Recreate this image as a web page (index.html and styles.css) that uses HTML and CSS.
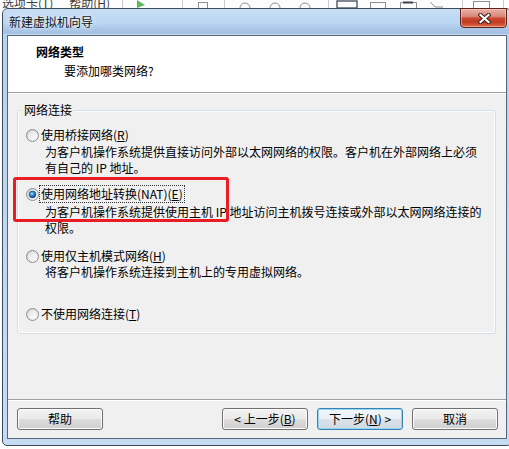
FILE: index.html
```html
<!DOCTYPE html>
<html lang="zh-CN">
<head>
<meta charset="utf-8">
<title>新建虚拟机向导</title>
<link rel="stylesheet" href="styles.css">
</head>
<body>
<div class="app-strip">
  <svg class="defs" width="0" height="0" aria-hidden="true">
    <defs>
      <linearGradient id="rOuter" x1="0" y1="0" x2="1" y2="1">
        <stop offset="0" stop-color="#cfcfcf"/>
        <stop offset="1" stop-color="#fbfbfb"/>
      </linearGradient>
      <linearGradient id="rInner" x1="0" y1="0" x2="1" y2="1">
        <stop offset="0" stop-color="#e2e2e2"/>
        <stop offset="1" stop-color="#ffffff"/>
      </linearGradient>
      <radialGradient id="rDot" cx="0.42" cy="0.38" r="0.6">
        <stop offset="0" stop-color="#a8e2ff"/>
        <stop offset="0.45" stop-color="#3a8fd6"/>
        <stop offset="1" stop-color="#123f78"/>
      </radialGradient>
    </defs>
  </svg>
  <span class="menu menu1">选项卡(T)</span>
  <span class="menu menu2">帮助(H)</span>
  <svg class="toolbar" width="394" height="8" viewBox="0 0 394 8" aria-hidden="true">
    <g stroke="#c8ccd2" stroke-width="1">
      <line x1="7.5" y1="0" x2="7.5" y2="8"/>
      <line x1="67.5" y1="0" x2="67.5" y2="8"/>
      <line x1="109.5" y1="0" x2="109.5" y2="8"/>
      <line x1="213.5" y1="0" x2="213.5" y2="8"/>
      <line x1="347.5" y1="0" x2="347.5" y2="8"/>
      <line x1="388.5" y1="0" x2="388.5" y2="8"/>
    </g>
    <path d="M22 0 L30 5 L22 8 Z" fill="#5cb85c"/>
    <g fill="none" stroke="#8c9097" stroke-width="1">
      <rect x="83.5" y="2.5" width="9" height="6"/>
      <path d="M125 8 A5 5 0 0 1 135 8"/>
      <path d="M155 8 A5 5 0 0 1 165 8"/>
      <path d="M185 8 A5 5 0 0 1 195 8"/>
      <rect x="255.5" y="2.5" width="15" height="6"/>
      <path d="M285.5 8 V2.5 H301.5 V8"/>
      <path d="M315.5 2 L320 7 H328"/>
      <rect x="358.5" y="1.5" width="16" height="7"/>
    </g>
    <rect x="222" y="1" width="20" height="7" fill="none" stroke="#4c5663" stroke-width="1.4"/>
    <path d="M288 2.5 H298" stroke="#3a4350" stroke-width="2"/>
  </svg>
</div>

<div class="dialog">
  <div class="titlebar">
    <span class="title">新建虚拟机向导</span>
    <div class="close">
      <svg width="13" height="11" viewBox="0 0 13 11" aria-hidden="true">
        <path d="M2.5 2 L10.5 9 M10.5 2 L2.5 9" stroke="#3b1e1a" stroke-width="4.2" stroke-linecap="square"/>
        <path d="M2.5 2 L10.5 9 M10.5 2 L2.5 9" stroke="#ffffff" stroke-width="2.2" stroke-linecap="square"/>
      </svg>
    </div>
  </div>

  <div class="client">
    <div class="header">
      <div class="h-title">网络类型</div>
      <div class="h-sub">要添加哪类网络?</div>
    </div>

    <div class="content">
      <div class="group">
        <div class="group-label">网络连接</div>

        <div class="option opt1">
          <div class="radio-row">
            <svg class="radio" width="13" height="13" viewBox="0 0 13 13"><circle cx="6.5" cy="6.5" r="6" fill="url(#rOuter)" stroke="#8e8f8f"/><circle cx="6.5" cy="6.5" r="4" fill="url(#rInner)"/></svg>
            <span>使用桥接网络(<span class="mn">R</span>)</span>
          </div>
          <div class="desc">为客户机操作系统提供直接访问外部以太网网络的权限。客户机在外部网络上必须<br>有自己的 IP 地址。</div>
        </div>

        <div class="option opt2">
          <div class="radio-row">
            <svg class="radio" width="13" height="13" viewBox="0 0 13 13"><circle cx="6.5" cy="6.5" r="6" fill="url(#rOuter)" stroke="#8e8f8f"/><circle cx="6.5" cy="6.5" r="4" fill="url(#rInner)"/><circle cx="6.5" cy="6.5" r="3.4" fill="url(#rDot)" stroke="#1b4a80" stroke-width="0.6"/></svg>
            <span class="focus">使用网络地址转换(NAT)(<span class="mn">E</span>)</span>
          </div>
          <div class="desc">为客户机操作系统提供使用主机 IP 地址访问主机拨号连接或外部以太网网络连接的<br>权限。</div>
        </div>

        <div class="option opt3">
          <div class="radio-row">
            <svg class="radio" width="13" height="13" viewBox="0 0 13 13"><circle cx="6.5" cy="6.5" r="6" fill="url(#rOuter)" stroke="#8e8f8f"/><circle cx="6.5" cy="6.5" r="4" fill="url(#rInner)"/></svg>
            <span>使用仅主机模式网络(<span class="mn">H</span>)</span>
          </div>
          <div class="desc">将客户机操作系统连接到主机上的专用虚拟网络。</div>
        </div>

        <div class="option opt4">
          <div class="radio-row">
            <svg class="radio" width="13" height="13" viewBox="0 0 13 13"><circle cx="6.5" cy="6.5" r="6" fill="url(#rOuter)" stroke="#8e8f8f"/><circle cx="6.5" cy="6.5" r="4" fill="url(#rInner)"/></svg>
            <span>不使用网络连接(<span class="mn">T</span>)</span>
          </div>
        </div>
      </div>

      <div class="spacer"></div>
      <div class="separator"></div>

      <div class="buttons">
        <div class="btn help">帮助</div>
        <div class="btn">&lt; 上一步(<span class="mn">B</span>)</div>
        <div class="btn default">下一步(<span class="mn">N</span>) &gt;</div>
        <div class="btn">取消</div>
      </div>
    </div>
  </div>
</div>

<div class="annotation"></div>
</body>
</html>
```

FILE: styles.css
```css
html, body {
  margin: 0;
  padding: 0;
}

body {
  width: 509px;
  height: 449px;
  overflow: hidden;
  position: relative;
  background: #ffffff;
  font-family: "Noto Sans CJK SC", "Liberation Sans", sans-serif;
  font-size: 12px;
  color: #000;
}

/* background application strip */
.app-strip {
  height: 8px;
  overflow: hidden;
  background: #fcfcfd;
  display: flex;
  align-items: flex-start;
}

.defs {
  flex: none;
}

.menu {
  line-height: 16px;
  margin-top: -5px;
  color: #3c3c3c;
  white-space: nowrap;
}

.menu1 {
  margin-left: 2px;
}

.menu2 {
  margin-left: 16px;
}

.toolbar {
  flex: none;
  margin-left: auto;
  display: block;
}

/* dialog window */
.dialog {
  box-sizing: border-box;
  width: 510px;
  margin-left: 2px;
  border: 1px solid #3b4a5c;
  border-radius: 6px 6px 5px 5px;
  padding: 0 4px 6px 4px;
  background: linear-gradient(#b7d2ef, #c7dcf2);
}

.titlebar {
  height: 26px;
  display: flex;
  justify-content: space-between;
  align-items: flex-start;
  margin: 0 -4px;
  padding: 0 4px;
  border-radius: 5px 5px 0 0;
  background: linear-gradient(#c8def5 0%, #bad6f4 55%, #acc9e9 72%, #a3c0e2 94%, #d4e4f4 100%);
}

.title {
  padding-left: 2px;
  line-height: 25px;
  color: #111;
  text-shadow: 0 0 6px #e8f2fc, 0 0 3px #e8f2fc;
  white-space: nowrap;
}

.close {
  box-sizing: border-box;
  width: 47px;
  height: 20px;
  margin-top: -1px;
  border: 1px solid #5b2319;
  border-radius: 0 0 4px 4px;
  background: linear-gradient(#e9b0a4 0%, #d98a7b 40%, #c8492f 52%, #c03a22 72%, #e06a44 100%);
  box-shadow: inset 0 0 0 1px rgba(255, 210, 200, 0.55);
  display: flex;
  align-items: center;
  justify-content: center;
}

.close svg {
  display: block;
  margin-left: 2px;
}

/* client area */
.client {
  height: 402px;
  border: 1px solid #55667a;
  background: #f0f0f0;
  display: flex;
  flex-direction: column;
}

.header {
  height: 48px;
  padding: 8px 0 0 28px;
  background: #ffffff;
  border-bottom: 1px solid #a0a0a0;
}

.h-title {
  font-weight: bold;
  line-height: 16px;
}

.h-sub {
  margin: 3px 0 0 28px;
  line-height: 16px;
}

.content {
  flex: 1;
  display: flex;
  flex-direction: column;
  border-top: 1px solid #ffffff;
}

.group {
  margin: 16px 10px 0 9px;
  padding: 0 0 11px 0;
  border: 1px solid #d5dfe5;
  border-radius: 3px;
  box-shadow: inset 0 0 0 1px #fafcfd;
}

.group-label {
  width: max-content;
  margin: -9px 0 0 4px;
  padding: 0 2px;
  line-height: 16px;
  background: #f0f0f0;
}

.radio-row {
  display: flex;
  align-items: center;
  gap: 2px;
  margin-left: 8px;
  line-height: 16px;
  white-space: nowrap;
}

.radio {
  display: block;
  flex: none;
}

.desc {
  margin-left: 27px;
  line-height: 16px;
  white-space: nowrap;
}

.mn {
  text-decoration: underline;
}

.focus {
  outline: 1px dotted #333;
  padding: 0 1px;
  margin-left: -1px;
}

.opt1 { margin-top: 9px; }
.opt1 .desc { margin-top: 1px; }
.opt2 { margin-top: 10px; }
.opt2 .desc { margin-top: 2px; }
.opt3 { margin-top: 12px; }
.opt4 { margin-top: 26px; }

.spacer {
  flex: 1;
}

.separator {
  height: 1px;
  background: #a0a0a0;
  border-bottom: 1px solid #ffffff;
}

.buttons {
  display: flex;
  gap: 9px;
  padding: 7px 8px 8px 9px;
}

.btn {
  box-sizing: border-box;
  width: 86px;
  height: 22px;
  line-height: 20px;
  text-align: center;
  white-space: nowrap;
  border: 1px solid #707070;
  border-radius: 3px;
  background: linear-gradient(#f2f2f2 0%, #ebebeb 48%, #dddddd 52%, #cfcfcf 100%);
  box-shadow: inset 0 0 0 1px #fbfbfb;
}

.btn.help {
  margin-right: auto;
}

.btn.default {
  border-color: #3c7fb1;
  background: linear-gradient(#f2f6f9 0%, #eaf0f4 48%, #dbe3e9 52%, #d0dae1 100%);
  box-shadow: inset 0 0 0 1px #8fd9f8;
}

/* red highlight annotation drawn over the screenshot */
.annotation {
  position: absolute;
  left: 13px;
  top: 177px;
  width: 216px;
  height: 45px;
  box-sizing: border-box;
  border: 3px solid #ea1c24;
  border-radius: 3px;
}
```
